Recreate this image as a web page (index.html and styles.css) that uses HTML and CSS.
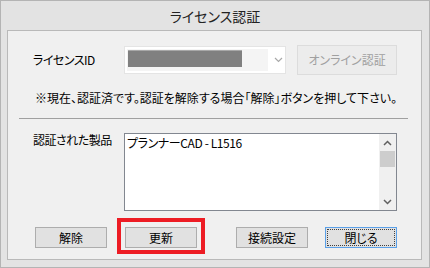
FILE: index.html
```html
<!DOCTYPE html>
<html lang="ja">
<head>
  <meta charset="UTF-8" />
  <title>ライセンス認証</title>
  <link rel="stylesheet" href="styles.css">
</head>
<body>
  <div class="window">
    <div class="titlebar">ライセンス認証</div>

    <div class="panel">
      <div class="id-row">
        <span class="label">ライセンスID</span>
        <div class="combo">
          <div class="combo-field"><span class="redact"></span></div>
          <svg class="combo-arrow" width="9" height="6" viewBox="0 0 9 6">
            <polyline points="1,1 4.5,4.5 8,1" fill="none" stroke="#a8a8a8" stroke-width="1.2" />
          </svg>
        </div>
        <button class="btn btn-disabled online" disabled>オンライン認証</button>
      </div>

      <p class="note">※現在、認証済です。認証を解除する場合「解除」ボタンを押して下さい。</p>

      <div class="sep"></div>

      <div class="product-row">
        <span class="label">認証された製品</span>
        <div class="listbox">
          <div class="list-text">プランナーCAD - L1516</div>
          <div class="scrollbar">
            <svg class="sb-arrow" width="9" height="6" viewBox="0 0 9 6">
              <polyline points="1,5 4.5,1.5 8,5" fill="none" stroke="#606060" stroke-width="1.5" />
            </svg>
            <div class="sb-thumb"></div>
            <div class="sb-track"></div>
            <svg class="sb-arrow" width="9" height="6" viewBox="0 0 9 6">
              <polyline points="1,1 4.5,4.5 8,1" fill="none" stroke="#606060" stroke-width="1.5" />
            </svg>
          </div>
        </div>
      </div>

      <div class="actions">
        <button class="btn release">解除</button>
        <span class="marked"><button class="btn update">更新</button></span>
        <button class="btn connect">接続設定</button>
        <button class="btn btn-default close">閉じる</button>
      </div>
    </div>
  </div>
</body>
</html>
```

FILE: styles.css
```css
* {
  box-sizing: border-box;
}

body {
  margin: 0;
  font-family: "Noto Sans CJK JP", "Noto Sans", sans-serif;
  font-feature-settings: "palt";
  font-size: 12px;
  color: #000;
  background-color: #fff;
}

.window {
  width: 430px;
  height: 268px;
  border: 1px solid #b4b4b4;
  background-color: #e3e3e3;
  display: flex;
  flex-direction: column;
}

.titlebar {
  height: 29px;
  display: flex;
  align-items: center;
  justify-content: center;
  font-size: 14px;
  color: #222;
  padding-top: 1px;
}

.panel {
  margin: 0 7px 0 6px;
  height: 230px;
  border: 1px solid #b9b9b9;
  background-color: #f0f0f0;
}

.label {
  line-height: 16px;
  letter-spacing: -0.5px;
}

/* ライセンスID */
.id-row {
  display: flex;
  align-items: center;
  margin-top: 14px;
  height: 30px;
  padding-left: 25px;
}

.id-row .label {
  width: 91px;
}

.combo {
  width: 162px;
  height: 28px;
  background-color: #fff;
  border: 1px solid #e4e4e4;
  padding: 2px;
  display: flex;
  align-items: center;
}

.combo-field {
  width: 141px;
  height: 22px;
  background-color: #f4f4f4;
  padding: 1px 0 0 1px;
}

.redact {
  display: block;
  width: 114px;
  height: 17px;
  background-color: #808080;
  border-top: 1px solid #a8a8a8;
}

.combo-arrow {
  margin-left: 6px;
}

.btn {
  font-family: inherit;
  font-feature-settings: "palt";
  font-size: 12px;
  color: #000;
  background-color: #e1e1e1;
  border: 1px solid #adadad;
  padding: 0;
  height: 21px;
  width: 72px;
  line-height: 18px;
}

.btn-disabled {
  background-color: #ececec;
  border-color: #dcdcdc;
  color: #a0a0a0;
}

.online {
  width: 100px;
  height: 30px;
  margin-left: 11px;
}

.note {
  margin: 15px 0 0 27px;
  line-height: 16px;
}

.sep {
  margin: 12px 13px 0 11px;
  height: 1px;
  background-color: #a0a0a0;
}

/* 認証された製品 */
.product-row {
  display: flex;
  margin-top: 14px;
  padding-left: 25px;
}

.product-row .label {
  width: 91px;
  margin-top: -1px;
}

.listbox {
  width: 273px;
  height: 78px;
  border: 1px solid #828790;
  background-color: #fff;
  display: flex;
}

.list-text {
  flex: 1;
  padding: 1px 0 0 2px;
  line-height: 16px;
  letter-spacing: -0.4px;
}

.scrollbar {
  width: 17px;
  background-color: #f0f0f0;
  display: flex;
  flex-direction: column;
  align-items: center;
}

.sb-arrow {
  margin: 6px 0 5px;
}

.sb-thumb {
  width: 15px;
  height: 16px;
  background-color: #cdcdcd;
}

.sb-track {
  flex: 1;
}

/* ボタン */
.actions {
  display: flex;
  margin-top: 16px;
  padding-left: 27px;
}

.marked {
  position: relative;
  display: flex;
  margin-left: 18px;
}

.marked::after {
  content: "";
  position: absolute;
  top: -9px;
  left: -8px;
  right: -8px;
  bottom: -6px;
  border: 4px solid #ed1c24;
}

.connect {
  margin-left: 39px;
}

.close {
  margin-left: 17px;
}

.btn-default {
  border-color: #5aa0e8;
  outline: 1px dotted #404040;
  outline-offset: -3px;
}
```
